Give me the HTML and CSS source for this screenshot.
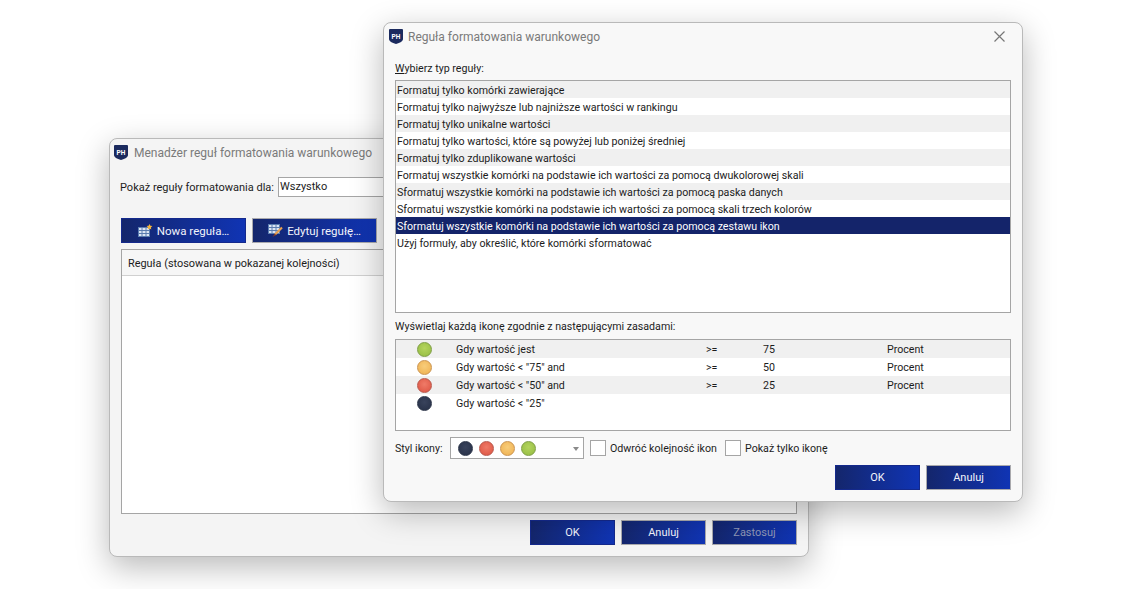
FILE: index.html
```html
<!DOCTYPE html>
<html lang="pl">
<head>
    <meta charset="UTF-8">
    <title>Formatowanie warunkowe</title>
    <link rel="stylesheet" href="styles.css">
</head>
<body>
    <!-- Rule manager, behind -->
    <div class="window manager">
        <div class="titlebar">
            <svg class="logo" viewBox="0 0 14 15"><path d="M1 0h12a1 1 0 0 1 1 1v9c0 2-3 4-7 5-4-1-7-3-7-5V1a1 1 0 0 1 1-1z" fill="#1b2a5e"/><text x="7" y="9.5" text-anchor="middle" class="logo-text">PH</text></svg>
            <span>Menadżer reguł formatowania warunkowego</span>
        </div>
        <div class="show-row">
            <span class="show-label">Pokaż reguły formatowania dla:</span>
            <div class="show-input">Wszystko</div>
        </div>
        <div class="tool-row">
            <button class="btn btn-tool">
                <svg class="tool-icon" viewBox="0 0 15 13"><rect x=".5" y="3.500" width="11" height="9" fill="#dbe5f4" stroke="#5b7db0"/><path d="M.5 6.500h11M.5 9.500h11M4 3.500v9M8 3.500v9" stroke="#5b7db0"/><path d="M11.500 0l.9 1.800 2 .3-1.500 1.400.4 2-1.800-1-1.800 1 .4-2-1.500-1.400 2-.3z" fill="#f5b63c"/></svg>
                Nowa reguła…
            </button>
            <button class="btn btn-tool btn-edge">
                <svg class="tool-icon" viewBox="0 0 15 13"><rect x=".5" y=".5" width="11" height="9" fill="#dbe5f4" stroke="#5b7db0"/><path d="M.5 3.500h11M.5 6.500h11M4 .5v9M8 .5v9" stroke="#5b7db0"/><path d="M14 3.500L7 10.500" stroke="#e8a050" stroke-width="2.200"/><path d="M6.800 9.500L8 11l-3.500 2z" fill="#8a3a20"/></svg>
                Edytuj regułę…
            </button>
        </div>
        <div class="rules">
            <div class="rules-head"><div class="rules-col">Reguła (stosowana w pokazanej kolejności)</div></div>
        </div>
        <div class="footer manager-footer">
            <button class="btn">OK</button>
            <button class="btn btn-edge">Anuluj</button>
            <button class="btn btn-edge btn-off">Zastosuj</button>
        </div>
    </div>

    <!-- Rule editor, in front -->
    <div class="window editor">
        <div class="titlebar">
            <svg class="logo" viewBox="0 0 14 15"><path d="M1 0h12a1 1 0 0 1 1 1v9c0 2-3 4-7 5-4-1-7-3-7-5V1a1 1 0 0 1 1-1z" fill="#1b2a5e"/><text x="7" y="9.5" text-anchor="middle" class="logo-text">PH</text></svg>
            <span>Reguła formatowania warunkowego</span>
            <svg class="close" viewBox="0 0 11 11"><path d="M.5.500l10 10M10.500.500l-10 10" stroke="#777" stroke-width="1.200"/></svg>
        </div>
        <div class="editor-body">
            <div class="heading"><u>W</u>ybierz typ reguły:</div>
            <div class="type-list">
                <div class="type-row">Formatuj tylko komórki zawierające</div>
                <div class="type-row">Formatuj tylko najwyższe lub najniższe wartości w rankingu</div>
                <div class="type-row">Formatuj tylko unikalne wartości</div>
                <div class="type-row">Formatuj tylko wartości, które są powyżej lub poniżej średniej</div>
                <div class="type-row">Formatuj tylko zduplikowane wartości</div>
                <div class="type-row">Formatuj wszystkie komórki na podstawie ich wartości za pomocą dwukolorowej skali</div>
                <div class="type-row">Sformatuj wszystkie komórki na podstawie ich wartości za pomocą paska danych</div>
                <div class="type-row">Sformatuj wszystkie komórki na podstawie ich wartości za pomocą skali trzech kolorów</div>
                <div class="type-row selected">Sformatuj wszystkie komórki na podstawie ich wartości za pomocą zestawu ikon</div>
                <div class="type-row">Użyj formuły, aby określić, które komórki sformatować</div>
            </div>
            <div class="heading heading-icons">Wyświetlaj każdą ikonę zgodnie z następującymi zasadami:</div>
            <div class="icon-table">
                <div class="icon-row">
                    <span class="dot dot-green"></span><span>Gdy wartość jest</span><span>&gt;=</span><span>75</span><span>Procent</span>
                </div>
                <div class="icon-row">
                    <span class="dot dot-orange"></span><span>Gdy wartość &lt; "75" and</span><span>&gt;=</span><span>50</span><span>Procent</span>
                </div>
                <div class="icon-row">
                    <span class="dot dot-red"></span><span>Gdy wartość &lt; "50" and</span><span>&gt;=</span><span>25</span><span>Procent</span>
                </div>
                <div class="icon-row">
                    <span class="dot dot-navy"></span><span>Gdy wartość &lt; "25"</span>
                </div>
            </div>
            <div class="style-row">
                <span class="style-label">Styl ikony:</span>
                <div class="combo">
                    <span class="dot dot-navy"></span>
                    <span class="dot dot-red"></span>
                    <span class="dot dot-orange"></span>
                    <span class="dot dot-green"></span>
                    <span class="combo-arrow"></span>
                </div>
                <span class="check"></span>
                <span class="check-label">Odwróć kolejność ikon</span>
                <span class="check check-second"></span>
                <span>Pokaż tylko ikonę</span>
            </div>
            <div class="footer">
                <button class="btn">OK</button>
                <button class="btn btn-edge">Anuluj</button>
            </div>
        </div>
    </div>
</body>
</html>
```

FILE: styles.css
```css
html, body {
    height: 100%;
}

body {
    margin: 0;
    background-color: #fff;
    font-family: Roboto, sans-serif;
    font-size: 10.65px;
    color: #1c1c1c;
    overflow: hidden;
    position: relative;
}

.window {
    position: absolute;
    box-sizing: border-box;
    background-color: #f8f8f8;
    border: 1px solid #b9b9b9;
    border-radius: 8px;
    box-shadow: 0 10px 32px rgba(0, 0, 0, 0.28);
}

.manager {
    left: 109px;
    top: 138px;
    width: 700px;
    height: 419px;
    padding: 0 11px;
    background-color: #f4f4f4;
}

.editor {
    left: 383px;
    top: 22px;
    width: 640px;
    height: 480px;
}

.titlebar {
    height: 25px;
    display: flex;
    align-items: center;
    gap: 5px;
    font-size: 12px;
    color: #7a7a7a;
    padding-top: 1px;
}

.manager .titlebar {
    margin-left: -7px;
    gap: 6px;
}

.editor .titlebar {
    padding-left: 5px;
}

.logo {
    width: 14px;
    height: 15px;
    flex: none;
}

.logo-text {
    font-size: 6.5px;
    font-weight: 700;
    fill: #fff;
}

.close {
    width: 11px;
    height: 11px;
    margin-left: auto;
    margin-right: 17px;
}

.show-row {
    display: flex;
    align-items: center;
    margin-top: 12px;
    margin-left: -1px;
    height: 20px;
    font-size: 11px;
}

.show-label {
    width: 158px;
    white-space: nowrap;
}

.show-input {
    box-sizing: border-box;
    width: 200px;
    height: 20px;
    padding-left: 1px;
    line-height: 17px;
    border: 1px solid #a5a5a5;
    background-color: #fff;
}

.tool-row {
    display: flex;
    gap: 6px;
    margin-top: 21px;
}

.btn {
    box-sizing: border-box;
    width: 85px;
    height: 25px;
    padding: 0;
    border: 1px solid #14298c;
    background: linear-gradient(90deg, #14266c, #1034b4);
    color: #f2f4fb;
    font-family: Roboto, sans-serif;
    font-size: 11px;
    display: flex;
    align-items: center;
    justify-content: center;
}

.btn-edge {
    border-color: #a9a9ad;
}

.btn-off {
    color: #8f97b5;
}

.btn-tool {
    width: 125px;
    gap: 4px;
    font-size: 11.5px;
}

.tool-icon {
    width: 15px;
    height: 13px;
}

.rules {
    box-sizing: border-box;
    height: 265px;
    margin-top: 6px;
    border: 1px solid #a5a5a5;
    background-color: #fff;
}

.rules-head {
    height: 25px;
    border-bottom: 1px solid #d0d0d0;
    background-color: #f6f6f6;
}

.rules-col {
    box-sizing: border-box;
    width: 262px;
    height: 25px;
    padding-left: 6px;
    font-size: 10.9px;
    line-height: 27px;
    border-right: 1px solid #a5a5a5;
    white-space: nowrap;
}

.footer {
    display: flex;
    justify-content: flex-end;
    gap: 6px;
}

.manager-footer {
    margin-top: 6px;
}

.editor-body {
    padding: 11px 11px 0;
}

.heading {
    height: 16px;
    line-height: 18px;
}

.heading-icons {
    margin-top: 5px;
}

.type-list {
    box-sizing: border-box;
    height: 233px;
    margin-top: 4px;
    border: 1px solid #a5a5a5;
    background-color: #fff;
}

.type-row {
    height: 17px;
    line-height: 19px;
    padding-left: 1px;
    white-space: nowrap;
}

.type-row:nth-child(odd) {
    background-color: #f0f0f0;
}

.type-row:nth-child(10) {
    background-color: #fff;
}

.type-row.selected {
    background-color: #14246a;
    color: #fff;
}

.icon-table {
    box-sizing: border-box;
    height: 92px;
    margin-top: 5px;
    border: 1px solid #a5a5a5;
    background-color: #fff;
}

.icon-row {
    display: grid;
    grid-template-columns: 60px 250px 57px 124px 1fr;
    align-items: center;
    height: 18px;
}

.icon-row:nth-child(odd) {
    background-color: #f0f0f0;
}

.icon-row .dot {
    justify-self: center;
    margin-left: -4px;
}

.dot {
    box-sizing: border-box;
    display: block;
    width: 15px;
    height: 15px;
    border-radius: 50%;
    border: 1px solid rgba(0, 0, 0, 0.2);
}

.dot-green {
    background: radial-gradient(circle at 50% 40%, #b4d45e, #93bb41);
    border-color: #7f9e45;
}

.dot-orange {
    background: radial-gradient(circle at 50% 40%, #f8cd7a, #eeaf4f);
    border-color: #cb9450;
}

.dot-red {
    background: radial-gradient(circle at 50% 40%, #ef7b68, #dc5241);
    border-color: #b9584c;
}

.dot-navy {
    background: radial-gradient(circle at 50% 40%, #39435c, #262f46);
    border-color: #2c3549;
}

.style-row {
    display: flex;
    align-items: center;
    height: 22px;
    margin-top: 6px;
}

.style-label {
    width: 55px;
}

.combo {
    box-sizing: border-box;
    width: 134px;
    height: 22px;
    padding-left: 7px;
    display: flex;
    align-items: center;
    gap: 6px;
    border: 1px solid #a5a5a5;
    background-color: #fff;
    position: relative;
}

.combo-arrow {
    position: absolute;
    right: 4px;
    top: 9px;
    border: 3.500px solid transparent;
    border-top: 4px solid #8a8a8a;
}

.check {
    box-sizing: border-box;
    width: 16px;
    height: 16px;
    margin: 0 4px 0 6px;
    border: 1px solid #a5a5a5;
    background-color: #fff;
}

.check-label {
    width: 107px;
    white-space: nowrap;
}

.check-second {
    margin-left: 8px;
}

.editor .footer {
    margin-top: 6px;
}
```
